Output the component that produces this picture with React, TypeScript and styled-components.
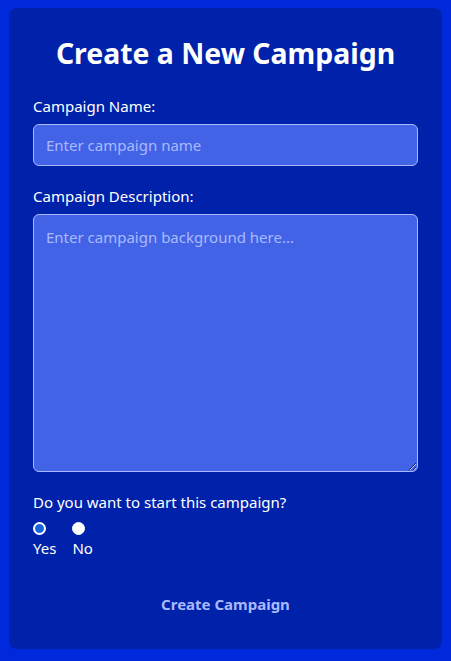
import React, { useState } from "react";
import styled, { createGlobalStyle } from "styled-components";

const GlobalStyle = createGlobalStyle`
    html, body {
        margin: 0;
        padding: 0;
        background-color: #0029db;
    }
    body {
        font-family: "Noto Sans", "Open Sans", sans-serif;
        color: #ffffff;
    }
    * {
        box-sizing: border-box;
    }
`;

const Page = styled.div`
    padding: 8px 9px 14px 9px;
`;

const Card = styled.form`
    background-color: #0022aa;
    border-radius: 8px;
    padding: 28px 24px 27px 24px;
    display: flex;
    flex-direction: column;
`;

const Title = styled.h1`
    margin: 0 0 26px 0;
    font-size: 28.4px;
    font-weight: 700;
    text-align: center;
    line-height: 1.2;
`;

const Field = styled.div`
    display: flex;
    flex-direction: column;
    margin-bottom: 20px;
`;

const Label = styled.label`
    font-size: 15px;
    margin-bottom: 8px;
`;

const inputBase = `
    width: 100%;
    background-color: #4363e6;
    border: 1px solid #aab8ff;
    border-radius: 6px;
    color: #ffffff;
    font-family: "Noto Sans", "Open Sans", sans-serif;
    font-size: 15px;
    padding: 10px 12px;
    outline: none;
    &::placeholder {
        color: #a9b9ff;
    }
`;

const TextInput = styled.input`
    ${inputBase}
    height: 42px;
`;

const TextArea = styled.textarea`
    ${inputBase}
    padding: 12px;
    height: 258px;
    resize: vertical;
`;

const Question = styled.p`
    margin: 0 0 10px 0;
    font-size: 15px;
`;

const RadioRow = styled.div`
    display: flex;
    gap: 16px;
`;

const RadioOption = styled.label`
    display: flex;
    flex-direction: column;
    align-items: flex-start;
    font-size: 15px;
`;

const Radio = styled.input`
    appearance: none;
    margin: 0 0 3px 0;
    width: 13px;
    height: 13px;
    border-radius: 50%;
    background-color: #ffffff;
    border: 1px solid #ffffff;
    cursor: pointer;
    &:checked {
        border: 2px solid #ffffff;
        background-color: #1565e0;
    }
`;

const SubmitButton = styled.button`
    align-self: center;
    margin-top: 28px;
    background: transparent;
    border: none;
    color: #a9b9ff;
    font-family: "Noto Sans", "Open Sans", sans-serif;
    font-size: 15px;
    font-weight: 700;
    padding: 8px 16px;
    cursor: pointer;
`;

export default function App() {
    const [name, setName] = useState("");
    const [description, setDescription] = useState("");
    const [start, setStart] = useState("yes");

    return (
        <>
            <GlobalStyle />
            <Page>
                <Card onSubmit={(e) => e.preventDefault()}>
                    <Title>Create a New Campaign</Title>
                    <Field>
                        <Label htmlFor="campaign-name">Campaign Name:</Label>
                        <TextInput
                            id="campaign-name"
                            type="text"
                            placeholder="Enter campaign name"
                            value={name}
                            onChange={(e) => setName(e.target.value)}
                        />
                    </Field>
                    <Field>
                        <Label htmlFor="campaign-description">Campaign Description:</Label>
                        <TextArea
                            id="campaign-description"
                            placeholder="Enter campaign background here..."
                            value={description}
                            onChange={(e) => setDescription(e.target.value)}
                        />
                    </Field>
                    <Question>Do you want to start this campaign?</Question>
                    <RadioRow>
                        <RadioOption>
                            <Radio type="radio" name="start" value="yes" checked={start === "yes"} onChange={() => setStart("yes")} />
                            Yes
                        </RadioOption>
                        <RadioOption>
                            <Radio type="radio" name="start" value="no" checked={start === "no"} onChange={() => setStart("no")} />
                            No
                        </RadioOption>
                    </RadioRow>
                    <SubmitButton type="submit">Create Campaign</SubmitButton>
                </Card>
            </Page>
        </>
    );
}
